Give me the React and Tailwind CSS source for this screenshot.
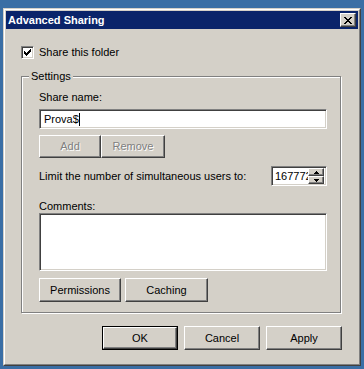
import React from "react";

const raised =
  "border border-t-white border-l-white border-r-[#404040] border-b-[#404040] shadow-[inset_-1px_-1px_0_#808080]";
const sunken =
  "border border-t-[#808080] border-l-[#808080] border-r-white border-b-white shadow-[inset_1px_1px_0_#404040,inset_-1px_-1px_0_#d4d0c8]";

function Button({ children, className = "", disabled = false, isDefault = false }) {
  const inner = (
    <div
      className={`${raised} bg-[#d4d0c8] h-full w-full flex items-center justify-center ${
        disabled ? "text-[#808080] [text-shadow:1px_1px_0_#fff]" : "text-black"
      }`}
    >
      {children}
    </div>
  );
  if (isDefault) {
    return <div className={`border border-black ${className}`}>{inner}</div>;
  }
  return <div className={className}>{inner}</div>;
}

export default function App() {
  return (
    <div className="w-[364px] h-[369px] bg-[#3a6ea5] pt-[8px] pl-[3px] font-['Liberation_Sans',Arial,sans-serif] text-[11px] leading-[13px] text-black">
      {/* window frame */}
      <div className="w-[358px] h-[358px] border border-t-[#d4d0c8] border-l-[#d4d0c8] border-r-[#404040] border-b-[#404040]">
        <div className="h-full w-full border border-t-white border-l-white border-r-[#808080] border-b-[#808080] bg-[#d4d0c8] p-px flex flex-col">
          {/* title bar */}
          <div className="h-[18px] bg-[#0a246a] flex items-center justify-between pl-[2px] pr-[2px]">
            <span className="text-white font-bold text-[11px] leading-[13px]">Advanced Sharing</span>
            <div className={`${raised} bg-[#d4d0c8] w-[16px] h-[14px] flex items-center justify-center`}>
              <svg width="8" height="7" viewBox="0 0 8 7" shapeRendering="crispEdges">
                <path
                  d="M0 0h2v1h-2zM6 0h2v1h-2zM1 1h2v1h-2zM5 1h2v1h-2zM2 2h4v1h-4zM3 3h2v1h-2zM2 4h4v1h-4zM1 5h2v1h-2zM5 5h2v1h-2zM0 6h2v1h-2zM6 6h2v1h-2z"
                  fill="#000"
                />
              </svg>
            </div>
          </div>

          {/* body */}
          <div className="flex flex-col pl-[15px]">
            <label className="mt-[17px] flex items-center gap-[5px] h-[13px]">
              <span className={`${sunken} bg-white w-[13px] h-[13px] flex items-center justify-center`}>
                <svg width="7" height="7" viewBox="0 0 7 7" shapeRendering="crispEdges">
                  <path
                    d="M6 0h1v3h-1zM5 1h1v3h-1zM4 2h1v3h-1zM3 3h1v3h-1zM2 4h1v3h-1zM1 3h1v3h-1zM0 2h1v3h-1z"
                    fill="#000"
                  />
                </svg>
              </span>
              <span>Share this folder</span>
            </label>

            {/* Settings group */}
            <div className="relative mt-[17px] w-[320px] border border-[#808080] shadow-[inset_1px_1px_0_#fff,1px_1px_0_#fff] pl-[17px] pt-[14px] pb-[10px] flex flex-col">
              <span className="absolute left-[7px] top-[-7px] bg-[#d4d0c8] px-[2px]">Settings</span>

              <span>Share name:</span>
              <div className={`${sunken} bg-white mt-[5px] w-[288px] h-[20px] flex items-center pl-[4px]`}>
                <span>Prova$</span>
                <span className="w-px h-[13px] bg-black" />
              </div>

              <div className="mt-[6px] flex h-[23px]">
                <Button disabled className="w-[62px] h-full">Add</Button>
                <Button disabled className="w-[64px] h-full">Remove</Button>
              </div>

              <div className="mt-[8px] flex items-center w-[288px] justify-between h-[20px]">
                <span>Limit the number of simultaneous users to:</span>
                <div className={`${sunken} bg-white w-[56px] h-[20px] flex items-center`}>
                  <div className="pl-[3px] flex-1 min-w-0 overflow-hidden whitespace-nowrap">16777216</div>
                  <div className="flex flex-col w-[16px] h-[16px] mr-[2px] shrink-0">
                    <div className={`${raised} bg-[#d4d0c8] h-[8px] flex items-center justify-center`}>
                      <svg width="5" height="3" viewBox="0 0 5 3" shapeRendering="crispEdges">
                        <path d="M2 0h1v1h-1zM1 1h3v1h-3zM0 2h5v1h-5z" fill="#000" />
                      </svg>
                    </div>
                    <div className={`${raised} bg-[#d4d0c8] h-[8px] flex items-center justify-center`}>
                      <svg width="5" height="3" viewBox="0 0 5 3" shapeRendering="crispEdges">
                        <path d="M0 0h5v1h-5zM1 1h3v1h-3zM2 2h1v1h-1z" fill="#000" />
                      </svg>
                    </div>
                  </div>
                </div>
              </div>

              <span className="mt-[14px]">Comments:</span>
              <div className={`${sunken} bg-white w-[288px] h-[58px]`} />

              <div className="mt-[7px] flex gap-[4px] h-[24px]">
                <Button className="w-[82px] h-full">Permissions</Button>
                <Button className="w-[83px] h-full">Caching</Button>
              </div>
            </div>

            {/* dialog buttons */}
            <div className="mt-[13px] flex justify-end gap-[6px] pr-[16px] h-[24px]">
              <Button isDefault className="w-[76px] h-full">OK</Button>
              <Button className="w-[76px] h-full">Cancel</Button>
              <Button className="w-[76px] h-full">Apply</Button>
            </div>
          </div>
        </div>
      </div>
    </div>
  );
}
